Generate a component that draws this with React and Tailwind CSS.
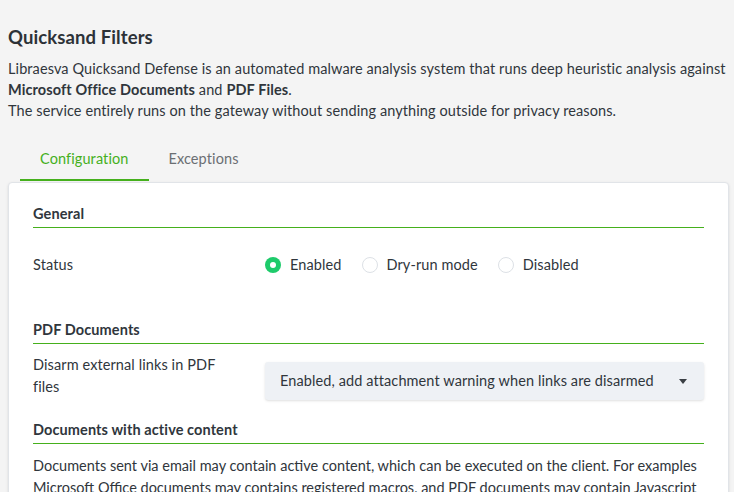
import { useState } from 'react'

const font = { fontFamily: 'Lato, "Open Sans", sans-serif' }

function SectionTitle({ children, className = '' }) {
  return (
    <div className={`border-b border-[#45b01c] pb-[3px] ${className}`}>
      <div className="text-[14.5px] font-bold leading-[20px] text-[#30363c]">{children}</div>
    </div>
  )
}

function Radio({ checked, label, onClick }) {
  return (
    <label className="flex cursor-pointer items-center gap-[9px]" onClick={onClick}>
      {checked ? (
        <span className="flex h-[16px] w-[16px] items-center justify-center rounded-full bg-[#1ecb6b]">
          <span className="h-[6px] w-[6px] rounded-full bg-white" />
        </span>
      ) : (
        <span className="h-[16px] w-[16px] rounded-full border border-[#dde1e6] bg-white" />
      )}
      <span className="text-[#30363c]">{label}</span>
    </label>
  )
}

export default function App() {
  const [status, setStatus] = useState('enabled')
  const [tab, setTab] = useState('config')

  return (
    <div
      className="min-h-[492px] bg-[#f4f4f4] pl-2 pt-[26px] text-[14.5px] tracking-[0.1px] text-[#30363c]"
      style={font}
    >
      <h1 className="text-[18.5px] font-bold leading-[22px] text-[#2d3238]">Quicksand Filters</h1>
      <p className="mt-[10px] leading-[21px]">
        Libraesva Quicksand Defense is an automated malware analysis system that runs deep heuristic analysis against{' '}
        <b>Microsoft Office Documents</b> and <b>PDF Files</b>.
        <br />
        The service entirely runs on the gateway without sending anything outside for privacy reasons.
      </p>

      <div className="mt-4 flex pl-3">
        <button
          onClick={() => setTab('config')}
          className={`border-b-2 px-5 pb-[10px] pt-3 leading-[20px] ${
            tab === 'config' ? 'border-[#45b01c] text-[#45b01c]' : 'border-transparent text-[#6b6f73]'
          }`}
        >
          Configuration
        </button>
        <button
          onClick={() => setTab('exceptions')}
          className={`border-b-2 px-5 pb-[10px] pt-3 leading-[20px] ${
            tab === 'exceptions' ? 'border-[#45b01c] text-[#45b01c]' : 'border-transparent text-[#6b6f73]'
          }`}
        >
          Exceptions
        </button>
      </div>

      <div className="mt-px w-[721px] rounded-t-[4px] border border-[#e1e4e8] bg-white px-6 pt-[21px] shadow-sm">
        <SectionTitle>General</SectionTitle>
        <div className="mt-[17px] grid h-[40px] grid-cols-[232px_1fr] items-center">
          <div>Status</div>
          <div className="flex items-center gap-5">
            <Radio checked={status === 'enabled'} label="Enabled" onClick={() => setStatus('enabled')} />
            <Radio checked={status === 'dry'} label="Dry-run mode" onClick={() => setStatus('dry')} />
            <Radio checked={status === 'disabled'} label="Disabled" onClick={() => setStatus('disabled')} />
          </div>
        </div>

        <SectionTitle className="mt-[35px]">PDF Documents</SectionTitle>
        <div className="mt-[10px] grid grid-cols-[232px_1fr] items-start">
          <div className="max-w-[200px] leading-[22px]">Disarm external links in PDF files</div>
          <div className="mt-2 flex h-[38px] items-center justify-between rounded-[3px] bg-[#eef1f5] px-[15px] shadow-sm">
            <span>Enabled, add attachment warning when links are disarmed</span>
            <svg width="8" height="5" viewBox="0 0 8 5" className="mr-[2px]">
              <path d="M0 0h8L4 5z" fill="#3a3f44" />
            </svg>
          </div>
        </div>

        <SectionTitle className="mt-5">Documents with active content</SectionTitle>
        <p className="-mr-2 mt-[11px] leading-[22px] tracking-normal">
          Documents sent via email may contain active content, which can be executed on the client. For examples
          Microsoft Office documents may contains registered macros, and PDF documents may contain Javascript
          code that can be executed when the document is opened.
        </p>
      </div>
    </div>
  )
}
